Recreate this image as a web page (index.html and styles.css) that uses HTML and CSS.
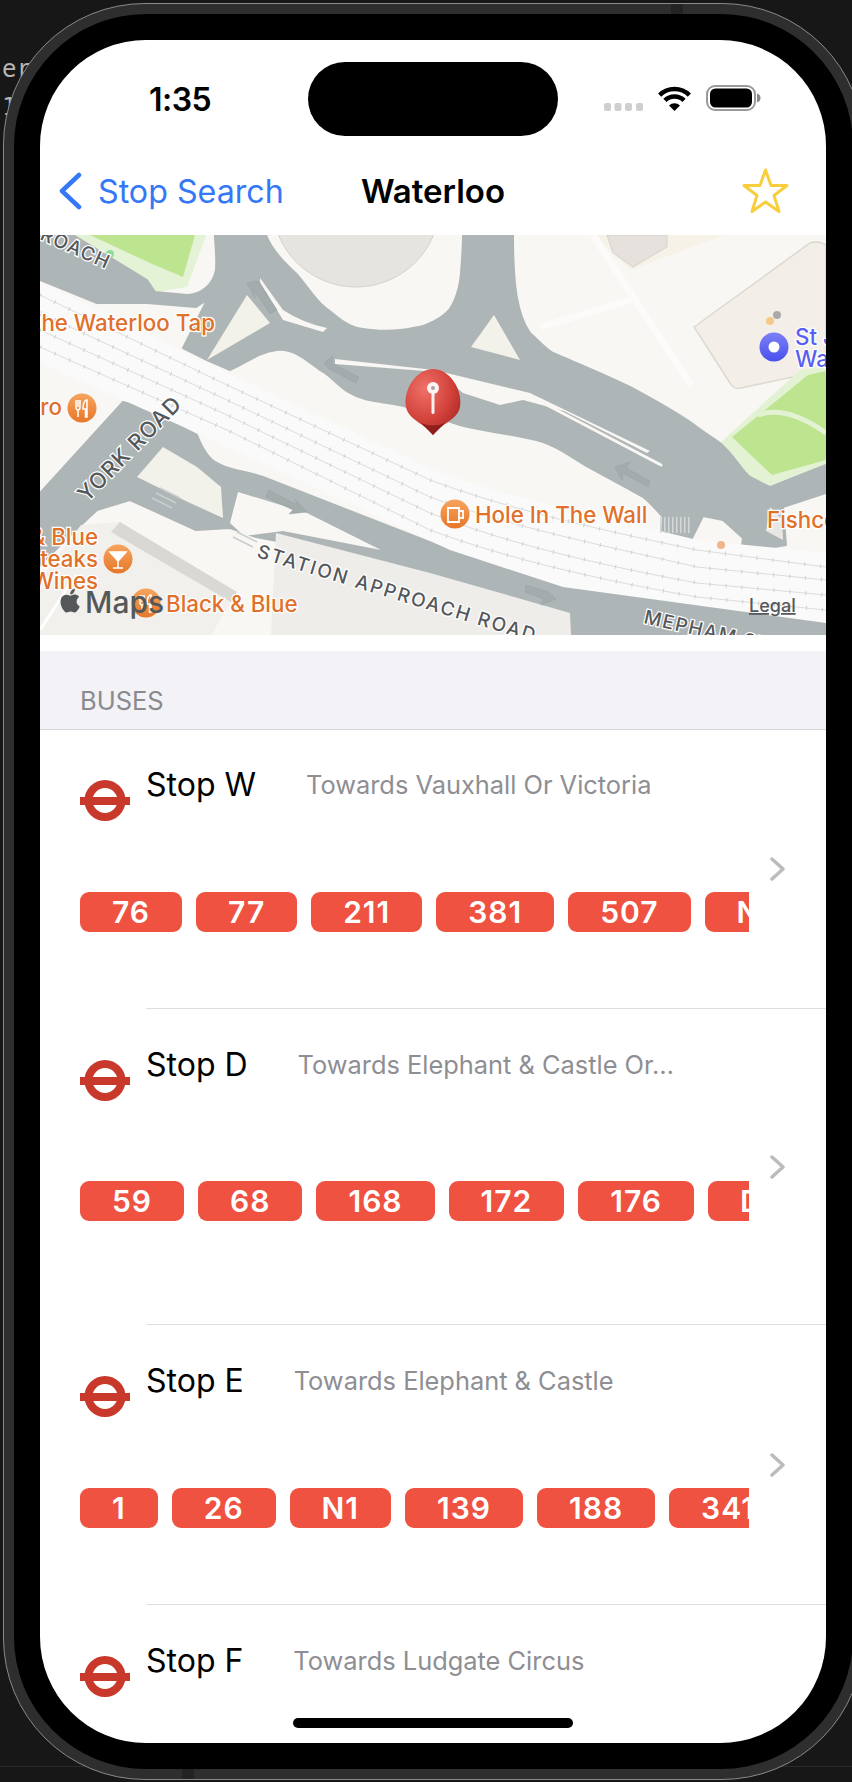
FILE: index.html
```html
<!DOCTYPE html>
<html>
<head>
    <title>Waterloo</title>
    <link rel="stylesheet" href="styles.css">
</head>
<body>
    <!-- Terminal text behind the simulator -->
    <div class="backdrop-text">er<br>1</div>

    <div class="device">
        <span class="antenna antenna-top"></span>
        <span class="antenna antenna-bottom"></span>
        <div class="bezel">
            <div class="screen">

                <!-- Status bar -->
                <div class="status">
                    <div class="time">1:35</div>
                    <div class="island"></div>
                    <svg class="indicators" width="157" height="26" viewBox="0 0 157 26">
                        <rect x="0" y="18" width="7" height="8" rx="2" fill="#cfcfcf"/>
                        <rect x="10.5" y="18" width="7" height="8" rx="2" fill="#cfcfcf"/>
                        <rect x="21" y="18" width="7" height="8" rx="2" fill="#cfcfcf"/>
                        <rect x="32" y="18" width="7" height="8" rx="2" fill="#cfcfcf"/>
                        <path d="M55.65 10.15A21 21 0 0 1 85.35 10.15" fill="none" stroke="#000" stroke-width="4.5"/>
                        <path d="M60.95 15.45A13.5 13.5 0 0 1 80.05 15.45" fill="none" stroke="#000" stroke-width="4.5"/>
                        <path d="M70.5 26L65 20.5A7.8 7.8 0 0 1 76 20.5Z" fill="#000"/>
                        <rect x="103" y="1" width="48" height="24" rx="8" fill="none" stroke="#9a9a9a" stroke-width="2"/>
                        <rect x="106" y="3.5" width="42" height="19" rx="5.5" fill="#000"/>
                        <path d="M153 8.5C155.5 9 156.5 11 156.5 13C156.5 15 155.5 17 153 17.5Z" fill="#8a8a8a"/>
                    </svg>
                </div>

                <!-- Navigation bar -->
                <div class="nav">
                    <div class="nav-back">
                        <svg width="24" height="38" viewBox="0 0 24 38">
                            <path d="M21 3L4 19L21 35" fill="none" stroke="#3478f6" stroke-width="4.5" stroke-linecap="round" stroke-linejoin="round"/>
                        </svg>
                        <span>Stop Search</span>
                    </div>
                    <div class="nav-title">Waterloo</div>
                    <div class="nav-action">
                        <svg width="47" height="46" viewBox="0 0 47 46">
                            <path d="M23.5 2L29 17.5H45L32 27.5L37 43.5L23.5 34L10 43.5L15 27.5L2 17.5H18Z" fill="none" stroke="#f9ce3c" stroke-width="3" stroke-linejoin="round"/>
                        </svg>
                    </div>
                </div>

                <!-- Map -->
                <svg class="map" width="786" height="400" viewBox="-1 0 786 400">
                    <defs>
                        <linearGradient id="poi" x1="0" y1="0" x2="0" y2="1">
                            <stop offset="0" stop-color="#f6a45e"/>
                            <stop offset="1" stop-color="#e6772a"/>
                        </linearGradient>
                        <linearGradient id="poiBlue" x1="0" y1="0" x2="0" y2="1">
                            <stop offset="0" stop-color="#7c80f6"/>
                            <stop offset="1" stop-color="#4a50ee"/>
                        </linearGradient>
                        <radialGradient id="pinHead" cx="0.35" cy="0.3" r="0.8">
                            <stop offset="0" stop-color="#ef7268"/>
                            <stop offset="0.6" stop-color="#d2423b"/>
                            <stop offset="1" stop-color="#a92622"/>
                        </radialGradient>
                    </defs>

                    <rect x="-1" width="786" height="400" fill="#f8f7f3"/>

                    <!-- Buildings and paths, top right -->
                    <path d="M552 0H683L590 35Z" fill="#f7f2e8"/>
                    <path d="M566 0H626V12L592 32L572 18Z" fill="#e6e1dc" stroke="#d6d2cc"/>
                    <path d="M552 0L650 150M500 92L590 65" fill="none" stroke="#fcfbf9" stroke-width="7"/>
                    <path d="M653 92L769 8Q777 5 785 10V135L700 153Q693 155 689 148Z" fill="#f3efe8" stroke="#dcd9d0" stroke-width="1.5"/>

                    <!-- Park, top left -->
                    <path d="M32 0H165L146 52L114 57L106 45Z" fill="#e4f2d6"/>
                    <path d="M49 0H154L142 42L109 28Z" fill="#bde48f"/>
                    <circle cx="69" cy="19" r="4" fill="#8fdc9a"/>

                    <!-- Park, right -->
                    <path d="M679 208L759 135L785 130V230L729 250L709 242Z" fill="#e3f2d3"/>
                    <path d="M691 202L767 140L785 136V225L731 240Z" fill="#bde48f"/>
                    <path d="M717 180Q745 170 785 198" fill="none" stroke="#e3f2d3" stroke-width="5"/>

                    <!-- Roundabout and main road -->
                    <path class="road" d="M-1 0H32L106 45L114 57L146 60C160 60 172 50 175 35C176 20 174 10 174 0H472C472 50 476 80 489 98C500 108 505 114 512 118C540 130 565 140 589 152C615 166 640 180 656 192C667 200 675 205 679 208C695 222 700 235 709 242L729 252L785 230V258L742 272L745 310L700 318L702 303L682 285L662 281L650 305L620 305L622 282C615 275 610 268 602 262C590 255 565 242 549 233C530 222 518 212 502 207C475 199 445 197 419 190C400 184 385 178 366 172C345 166 325 168 309 158C295 150 290 140 279 135C262 122 250 113 236 115C218 117 205 128 189 135L166 125L142 113L166 65L155 72L106 68L56 68L-1 45Z"/>
                    <path d="M226 0C232 15 245 28 256 38C268 52 278 68 289 75C300 84 310 92 322 93C340 96 358 95 372 92C380 91 385 89 389 87C398 83 405 78 409 72C415 62 418 50 419 38C420 25 421 10 421 0Z" fill="#f8f7f3"/>
                    <circle cx="315" cy="-32" r="84" fill="#e5e4df" stroke="#d4d3ce"/>

                    <!-- Traffic islands -->
                    <path d="M206 60L229 88L166 125Z" fill="#f3f2ea"/>
                    <path d="M219 43L242 75Q262 88 286 93L282 97L242 85L219 47Z" fill="#f8f7f3"/>
                    <path d="M453 80L479 125L430 112Z" fill="#f3f2ea"/>
                    <path d="M294 124L393 135L489 158L609 216L606 218L523 176L482 165L459 170L422 158L397 137L294 129Z" fill="#f8f7f3"/>
                    <path d="M506 170L620 230" fill="none" stroke="#f8f7f3" stroke-width="3" stroke-linecap="round"/>
                    <path d="M729 272L741 284L742 305L725 296Z" fill="#e8e7e3"/>

                    <!-- Road lanes under the railway -->
                    <path class="road" d="M-1 258L82 167L102 172L156 200C162 215 168 224 176 228C190 236 205 236 222 242L409 315L522 352L785 388V400H529L389 338L320 322L215 302L189 293L155 295L89 265L56 275L40 290L-1 330Z"/>
                    <path d="M197 257L266 278L340 315L242 296L203 301L189 288Z" fill="#f8f7f3"/>
                    <path d="M96 242L122 212L156 232L180 252L182 283L149 268Z" fill="#f3f2ea"/>

                    <!-- Buildings, bottom -->
                    <path d="M40 290L79 287L196 357L170 400H-1V345Z" fill="#f1f0ec"/>
                    <path d="M79 287L196 357L190 367L70 297Z" fill="#d9d8d4"/>
                    <path d="M235 298L389 338L529 378L530 400H230Z" fill="#eeede9"/>
                    <path d="M-1 395L35 340" fill="none" stroke="#fff" stroke-width="3"/>

                    <!-- Railway -->
                    <path d="M-1 47L186 138L389 233C460 262 556 280 656 305L785 318V388L522 352L409 315L156 198L-1 128Z" fill="#fafafa"/>
                    <g class="track">
                        <path d="M-1 60L186 150L389 245C470 275 560 295 656 315L785 332"/>
                        <path d="M-1 78L186 165L389 262C470 292 560 310 656 332L785 345"/>
                        <path d="M-1 95L186 180L389 278C470 310 560 330 656 348L785 360"/>
                        <path d="M-1 112L186 195L389 295C470 325 560 345 656 362L785 375"/>
                    </g>
                    <g class="track-ticks">
                        <path d="M-1 60L186 150L389 245C470 275 560 295 656 315L785 332"/>
                        <path d="M-1 78L186 165L389 262C470 292 560 310 656 332L785 345"/>
                        <path d="M-1 95L186 180L389 278C470 310 560 330 656 348L785 360"/>
                        <path d="M-1 112L186 195L389 295C470 325 560 345 656 362L785 375"/>
                    </g>

                    <!-- Lane arrows and crossings -->
                    <g class="arrow">
                        <path d="M206 48L217 46L236 75L229 79L213 55L214 63Z"/>
                        <path d="M283 128L292 121L291 128L318 142L315 148L288 134Z"/>
                        <path d="M574 232L589 227L585 233L609 246L607 252L582 238L581 245Z"/>
                        <path d="M485 350L508 357L515 364L500 370L503 364L484 357Z"/>
                        <path d="M228 255L256 270L254 264L266 277L248 279L252 275L225 262Z"/>
                    </g>
                    <path d="M619 290H649" fill="none" stroke="#d4d8d8" stroke-width="16" stroke-dasharray="1.5 2.5"/>
                    <path d="M192 302L212 312M196 297L216 307" fill="none" stroke="#c9cdcd" stroke-width="1.5"/>
                    <path d="M111 263L131 273M115 258L135 268M119 253L139 263" fill="none" stroke="#c9cdcd" stroke-width="1.5"/>

                    <!-- Road names -->
                    <text class="road-name" transform="translate(-2 4) rotate(24)">ROACH</text>
                    <text class="road-name road-york" transform="translate(46 268) rotate(-45.5)">YORK ROAD</text>
                    <text class="road-name road-long" transform="translate(215 322) rotate(17)">STATION APPROACH ROAD</text>
                    <text class="road-name" transform="translate(602 388) rotate(13)">MEPHAM ST</text>

                    <!-- Places -->
                    <text class="poi-label" text-anchor="end" x="174" y="96">The Waterloo Tap</text>
                    <text class="poi-label" text-anchor="end" x="21" y="180">ro</text>
                    <circle cx="41" cy="173" r="14.5" fill="url(#poi)"/>
                    <path d="M35 165V172Q35 175 37 175V182M37 165V172M39 165V172Q39 175 37 175M45 165Q42 167 42 174H44.5V182H46V165Z" fill="none" stroke="#fff" stroke-width="1.5"/>

                    <text class="poi-label" text-anchor="end" x="57" y="310">&amp; Blue</text>
                    <text class="poi-label" text-anchor="end" x="57" y="332">teaks</text>
                    <text class="poi-label" text-anchor="end" x="57" y="354">Wines</text>
                    <circle cx="77" cy="324" r="14.5" fill="url(#poi)"/>
                    <path d="M69 317H85L77 326ZM77 326V333M72 333H82" fill="#fff" stroke="#fff" stroke-width="1.5"/>

                    <circle cx="105" cy="368" r="14.5" fill="url(#poi)"/>
                    <path d="M99 360V367Q99 370 101 370V377M101 360V367M103 360V367Q103 370 101 370M109 360Q106 362 106 369H108.5V377H110V360Z" fill="none" stroke="#fff" stroke-width="1.5"/>
                    <text class="poi-label" x="125" y="377">Black &amp; Blue</text>

                    <circle cx="414" cy="279" r="14.5" fill="url(#poi)"/>
                    <path d="M407 273H418V287H407ZM418 276H422V283H418" fill="none" stroke="#fff" stroke-width="1.8"/>
                    <text class="poi-label" x="434" y="288">Hole In The Wall</text>

                    <text class="poi-label" x="726" y="293">Fishcotheque</text>

                    <circle cx="729" cy="86" r="4" fill="#f5c98a"/>
                    <circle cx="736" cy="80" r="4" fill="#aaaaaa"/>
                    <circle cx="733" cy="112" r="14.5" fill="url(#poiBlue)"/>
                    <circle cx="733" cy="112" r="5.5" fill="#fff"/>
                    <text class="poi-label poi-blue" x="754" y="110">St John's</text>
                    <text class="poi-label poi-blue" x="754" y="132">Waterloo</text>

                    <circle cx="680" cy="310" r="4" fill="#f3b48c"/>

                    <!-- Maps logo and legal link -->
                    <path transform="translate(16 352) scale(1.15)" fill="#55585a" d="M17.05 12.54c-.03-2.6 2.12-3.85 2.22-3.91-1.21-1.77-3.09-2.01-3.76-2.04-1.6-.16-3.12.94-3.93.94-.81 0-2.06-.92-3.39-.89-1.74.03-3.35 1.01-4.25 2.57-1.81 3.14-.46 7.8 1.3 10.35.86 1.25 1.89 2.65 3.24 2.6 1.3-.05 1.79-.84 3.36-.84s2.01.84 3.39.81c1.4-.02 2.28-1.27 3.14-2.53.99-1.45 1.4-2.85 1.42-2.93-.03-.01-2.72-1.04-2.75-4.13zM14.46 4.9c.72-.87 1.2-2.08 1.07-3.28-1.03.04-2.29.69-3.03 1.55-.66.77-1.24 2-1.09 3.18 1.15.09 2.33-.58 3.05-1.45z"/>
                    <text class="maps-word" x="44" y="378">Maps</text>
                    <text class="legal" x="708" y="377">Legal</text>

                    <!-- Pin -->
                    <path d="M365 172C362 155 375 134 392 134C409 134 422 155 419 172C416 186 400 188 392 200C384 188 368 186 365 172Z" fill="url(#pinHead)"/>
                    <path d="M380 188Q392 193 404 188L392 200Z" fill="#8e1f1b"/>
                    <rect x="390.5" y="155" width="3" height="24" rx="1.5" fill="#f7f0ee"/>
                    <circle cx="392" cy="153" r="6" fill="#fbf3f1"/>
                    <circle cx="392" cy="153" r="2" fill="#a9a3a1"/>
                </svg>

                <div class="map-gap"></div>

                <div class="section-head">BUSES</div>

                <!-- Stop W -->
                <div class="stop stop-first">
                    <div class="stop-main">
                        <div class="stop-head">
                            <svg class="roundel" width="50" height="41" viewBox="0 0 50 41">
                                <ellipse cx="25" cy="20.5" rx="16.5" ry="16.5" fill="none" stroke="#c8392b" stroke-width="8"/>
                                <rect x="0" y="17" width="50" height="8" fill="#c8392b"/>
                            </svg>
                            <span class="stop-name">Stop W</span>
                            <span class="stop-towards">Towards Vauxhall Or Victoria</span>
                        </div>
                        <div class="routes">
                            <span class="route">76</span>
                            <span class="route">77</span>
                            <span class="route">211</span>
                            <span class="route">381</span>
                            <span class="route">507</span>
                            <span class="route">N76</span>
                        </div>
                    </div>
                    <svg class="chevron" width="15" height="24" viewBox="0 0 15 24">
                        <path d="M2 2L13 12L2 22" fill="none" stroke="#bcbcc0" stroke-width="3.5" stroke-linecap="round" stroke-linejoin="round"/>
                    </svg>
                </div>
                <div class="separator"></div>

                <!-- Stop D -->
                <div class="stop stop-tall">
                    <div class="stop-main">
                        <div class="stop-head">
                            <svg class="roundel" width="50" height="41" viewBox="0 0 50 41">
                                <ellipse cx="25" cy="20.5" rx="16.5" ry="16.5" fill="none" stroke="#c8392b" stroke-width="8"/>
                                <rect x="0" y="17" width="50" height="8" fill="#c8392b"/>
                            </svg>
                            <span class="stop-name">Stop D</span>
                            <span class="stop-towards">Towards Elephant &amp; Castle Or…</span>
                        </div>
                        <div class="routes">
                            <span class="route">59</span>
                            <span class="route">68</span>
                            <span class="route">168</span>
                            <span class="route">172</span>
                            <span class="route">176</span>
                            <span class="route">D1</span>
                        </div>
                    </div>
                    <svg class="chevron" width="15" height="24" viewBox="0 0 15 24">
                        <path d="M2 2L13 12L2 22" fill="none" stroke="#bcbcc0" stroke-width="3.5" stroke-linecap="round" stroke-linejoin="round"/>
                    </svg>
                </div>
                <div class="separator"></div>

                <!-- Stop E -->
                <div class="stop">
                    <div class="stop-main">
                        <div class="stop-head">
                            <svg class="roundel" width="50" height="41" viewBox="0 0 50 41">
                                <ellipse cx="25" cy="20.5" rx="16.5" ry="16.5" fill="none" stroke="#c8392b" stroke-width="8"/>
                                <rect x="0" y="17" width="50" height="8" fill="#c8392b"/>
                            </svg>
                            <span class="stop-name">Stop E</span>
                            <span class="stop-towards">Towards Elephant &amp; Castle</span>
                        </div>
                        <div class="routes">
                            <span class="route">1</span>
                            <span class="route">26</span>
                            <span class="route">N1</span>
                            <span class="route">139</span>
                            <span class="route">188</span>
                            <span class="route">341</span>
                        </div>
                    </div>
                    <svg class="chevron" width="15" height="24" viewBox="0 0 15 24">
                        <path d="M2 2L13 12L2 22" fill="none" stroke="#bcbcc0" stroke-width="3.5" stroke-linecap="round" stroke-linejoin="round"/>
                    </svg>
                </div>
                <div class="separator"></div>

                <!-- Stop F, cut off by the bottom of the screen -->
                <div class="stop">
                    <div class="stop-main">
                        <div class="stop-head">
                            <svg class="roundel" width="50" height="41" viewBox="0 0 50 41">
                                <ellipse cx="25" cy="20.5" rx="16.5" ry="16.5" fill="none" stroke="#c8392b" stroke-width="8"/>
                                <rect x="0" y="17" width="50" height="8" fill="#c8392b"/>
                            </svg>
                            <span class="stop-name">Stop F</span>
                            <span class="stop-towards">Towards Ludgate Circus</span>
                        </div>
                    </div>
                </div>

                <div class="home-bar"></div>
            </div>
        </div>
    </div>
</body>
</html>
```

FILE: styles.css
```css
/* Page behind the simulator */
html, body {
    height: 100%;
    overflow: hidden;
}
body {
    margin: 0;
    background-color: #171717;
    background-image: linear-gradient(#2a2a2a, #2a2a2a);
    background-size: 100% 1px;
    background-position: 0 1766px;
    background-repeat: no-repeat;
    font-family: Inter, "Noto Sans", sans-serif;
    color: #000;
}
.backdrop-text {
    position: absolute;
    left: 2px;
    top: 50px;
    font-family: "DejaVu Sans Mono", monospace;
    font-size: 24px;
    line-height: 38px;
    color: #b5b5b5;
}

/* Simulator frame, runs off the right edge of the window */
.device {
    position: relative;
    box-sizing: border-box;
    width: 861px;
    height: 1777px;
    margin: 3px 0 0 3px;
    padding: 10px;
    border: 1px solid #8a8a8a;
    border-radius: 142px;
    background-color: #2e2e2e;
}
.antenna {
    position: absolute;
    width: 12px;
    height: 10px;
    background-color: #232323;
}
.antenna-top {
    left: 667px;
    top: 0;
}
.antenna-bottom {
    left: 178px;
    bottom: 0;
}
.bezel {
    box-sizing: border-box;
    height: 100%;
    padding: 26px 0 26px 26px;
    border-radius: 132px;
    background-color: #000;
}
.screen {
    position: relative;
    width: 786px;
    height: 1703px;
    overflow: hidden;
    border-radius: 106px;
    background-color: #fff;
}

/* Status bar */
.status {
    display: grid;
    grid-template-columns: 268px 250px 1fr;
    align-items: center;
    height: 74px;
    padding-top: 22px;
    padding-bottom: 14px;
}
.time {
    padding-left: 109px;
    font-size: 32px;
    font-weight: 600;
    letter-spacing: -0.5px;
}
.island {
    height: 74px;
    border-radius: 37px;
    background-color: #000;
}
.indicators {
    display: block;
    margin-left: 46px;
    margin-top: -2px;
}

/* Navigation bar */
.nav {
    display: grid;
    grid-template-columns: 1fr auto 1fr;
    align-items: center;
    height: 82px;
    padding-bottom: 3px;
}
.nav-back {
    display: flex;
    align-items: center;
    gap: 16px;
    padding-left: 18px;
    font-size: 32.2px;
    color: #3478f6;
}
.nav-title {
    font-size: 33px;
    font-weight: 600;
}
.nav-action {
    display: flex;
    justify-content: flex-end;
    padding-right: 37px;
}

/* Map */
.map {
    display: block;
}
.map-gap {
    height: 16px;
}
.road {
    fill: #aeb5b6;
    stroke: #aeb5b6;
    stroke-width: 2;
    stroke-linejoin: round;
}
.track path {
    fill: none;
    stroke: #dcdcdc;
    stroke-width: 1;
}
.track-ticks path {
    fill: none;
    stroke: #cfcfcf;
    stroke-width: 4;
    stroke-dasharray: 1 15;
}
.arrow path {
    fill: #a4abac;
    stroke: #9aa1a2;
    stroke-width: 0.5;
}
.poi-label {
    font-size: 22.3px;
    font-weight: 500;
    fill: #e0702a;
    stroke: #fff;
    stroke-width: 2.5px;
    paint-order: stroke;
}
.poi-blue {
    fill: #5a5ff0;
}
.road-name {
    font-size: 19px;
    font-weight: 500;
    letter-spacing: 1.5px;
    fill: #55585a;
    stroke: #fff;
    stroke-width: 2.5px;
    paint-order: stroke;
}
.road-york {
    font-size: 22px;
    letter-spacing: 1px;
}
.road-long {
    letter-spacing: 2px;
}
.maps-word {
    font-size: 30px;
    font-weight: 500;
    fill: #55585a;
}
.legal {
    font-size: 18px;
    font-weight: 500;
    fill: #55585a;
    text-decoration: underline;
}

/* Section header */
.section-head {
    height: 30px;
    padding: 35px 0 13px 40px;
    border-bottom: 1px solid #d8d8dc;
    background-color: #f2f2f7;
    font-size: 25.5px;
    line-height: 30px;
    color: #8a8a8e;
}

/* Stop rows */
.stop {
    display: flex;
    align-items: center;
    padding-left: 40px;
}
.stop-main {
    width: 669px;
    padding: 37px 0 76px;
}
.stop-first .stop-main {
    padding-top: 36px;
}
.stop-tall .stop-main {
    padding-bottom: 103px;
}
.stop-head {
    display: flex;
    align-items: flex-start;
    height: 55px;
}
.roundel {
    flex: none;
    margin-top: 14px;
}
.stop-name {
    margin-left: 16px;
    font-size: 32px;
    line-height: 38px;
}
.stop-towards {
    margin-left: 50px;
    font-size: 25.4px;
    line-height: 38px;
    color: #8e8e93;
}
.routes {
    display: flex;
    gap: 14px;
    margin-top: 71px;
    overflow: hidden;
}
.stop-tall .routes {
    margin-top: 80px;
}
.route {
    flex: none;
    height: 40px;
    padding: 0 32px;
    border-radius: 9px;
    background-color: #ef5241;
    font-size: 30px;
    font-weight: 600;
    letter-spacing: 1px;
    line-height: 40px;
    color: #fff;
}
.chevron {
    flex: none;
    margin-left: 21px;
}
.separator {
    height: 1px;
    margin-left: 106px;
    background-color: #dedede;
}

/* Home indicator sits over the list */
.home-bar {
    position: absolute;
    left: 253px;
    bottom: 15px;
    width: 280px;
    height: 10px;
    border-radius: 5px;
    background-color: #000;
}
```
